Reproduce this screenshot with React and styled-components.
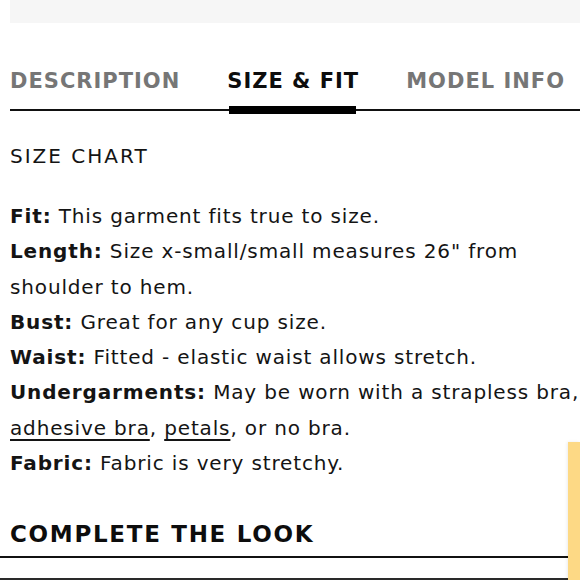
import styled, { createGlobalStyle } from 'styled-components'

const GlobalStyle = createGlobalStyle`
  html, body {
    margin: 0;
    padding: 0;
    background: #fff;
  }
  body {
    font-family: "DejaVu Sans", "Liberation Sans", sans-serif;
    color: #141414;
  }
`

const tabs = [
  { id: 1, name: 'DESCRIPTION' },
  { id: 2, name: 'SIZE & FIT', active: true },
  { id: 3, name: 'MODEL INFO' }
]

function App() {
  const details = [
    { label: 'Fit:', text: <>This garment fits true to size.</> },
    { label: 'Length:', text: <>Size x-small/small measures 26" from<br />shoulder to hem.</> },
    { label: 'Bust:', text: <>Great for any cup size.</> },
    { label: 'Waist:', text: <>Fitted - elastic waist allows stretch.</> },
    {
      label: 'Undergarments:',
      text: <>May be worn with a strapless bra,<br /><Link href='#'>adhesive bra</Link>, <Link href='#'>petals</Link>, or no bra.</>
    },
    { label: 'Fabric:', text: <>Fabric is very stretchy.</> }
  ]

  return (
    <Page>
      <GlobalStyle />
      <TopBar />
      <TabList>
        {tabs.map((tab) => (
          <Tab key={tab.id} $active={tab.active}>{tab.name}</Tab>
        ))}
      </TabList>
      <ChartTitle>SIZE CHART</ChartTitle>
      <Details>
        {details.map((item) => (
          <Line key={item.label}>
            <strong>{item.label}</strong> {item.text}
          </Line>
        ))}
      </Details>
      <LookHeader>
        <h2>COMPLETE THE LOOK</h2>
      </LookHeader>
      <BottomRule />
      <SideTab />
    </Page>
  )
}

export default App

const Page = styled.div`
  position: relative;
  width: 580px;
  height: 580px;
  overflow: hidden;
`

const TopBar = styled.div`
  height: 23px;
  margin-left: 10px;
  background: #f6f6f6;
`

const TabList = styled.div`
  display: flex;
  gap: 47px;
  margin: 46px 0 0 10px;
  border-bottom: 2px solid #111;
`

const Tab = styled.div`
  position: relative;
  padding-bottom: 16px;
  font-size: 21px;
  line-height: 24px;
  font-weight: bold;
  letter-spacing: 1px;
  white-space: nowrap;
  color: ${({ $active }) => ($active ? '#0d0d0d' : '#767676')};
  cursor: pointer;

  &::after {
    content: '';
    display: ${({ $active }) => ($active ? 'block' : 'none')};
    position: absolute;
    left: 2px;
    right: 3px;
    bottom: -5px;
    height: 8px;
    background: #000;
  }
`

const ChartTitle = styled.div`
  margin: 28px 0 0 10px;
  font-size: 20px;
  line-height: 35px;
  letter-spacing: 2px;
`

const Details = styled.div`
  margin: 25px 0 0 10px;
  font-size: 20px;
  line-height: 35.3px;
  letter-spacing: 0.85px;

  strong {
    font-weight: bold;
  }
`

const Line = styled.div`
  white-space: nowrap;
`

const Link = styled.a`
  color: inherit;
  text-decoration: underline;
  text-decoration-thickness: 1.5px;
  text-underline-offset: 4px;
`

const LookHeader = styled.div`
  margin: 38px 12px 0 0;
  padding: 0 0 7px 10px;
  border-bottom: 2px solid #111;

  h2 {
    margin: 0;
    font-size: 23px;
    line-height: 30px;
    font-weight: bold;
    letter-spacing: 1.7px;
    color: #0d0d0d;
  }
`

const BottomRule = styled.div`
  margin-top: 20px;
  border-top: 2px solid #2a2a2a;
`

const SideTab = styled.div`
  position: absolute;
  right: 0;
  top: 442px;
  bottom: 0;
  width: 12px;
  background: #fdd985;
  box-shadow: -1px 0 3px rgba(0, 0, 0, 0.08);
`
